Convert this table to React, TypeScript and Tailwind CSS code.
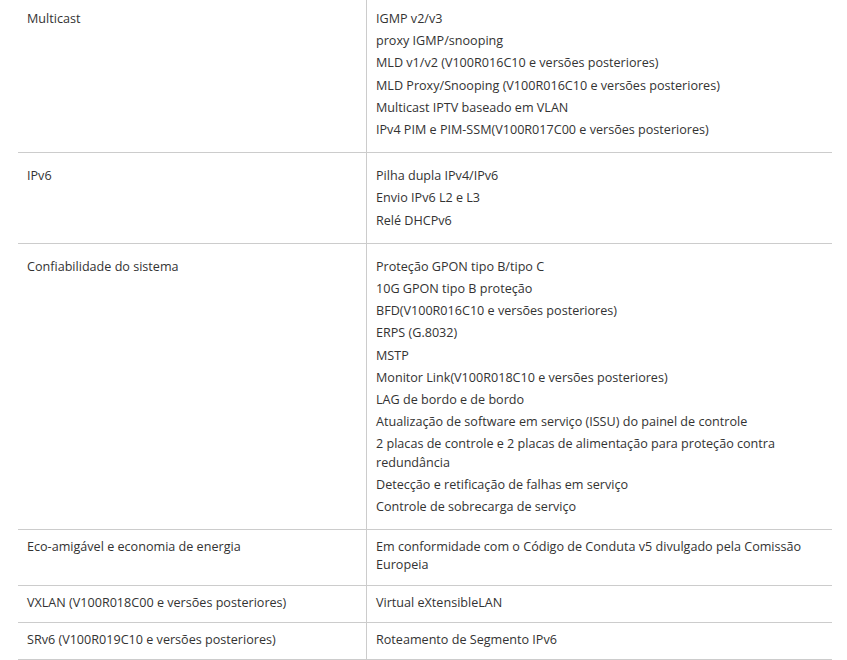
import React from "react";

type Row = { label: string; items: string[] };

const rows: Row[] = [
  {
    label: "Multicast",
    items: [
      "IGMP v2/v3",
      "proxy IGMP/snooping",
      "MLD v1/v2 (V100R016C10 e versões posteriores)",
      "MLD Proxy/Snooping (V100R016C10 e versões posteriores)",
      "Multicast IPTV baseado em VLAN",
      "IPv4 PIM e PIM-SSM(V100R017C00 e versões posteriores)",
    ],
  },
  {
    label: "IPv6",
    items: ["Pilha dupla IPv4/IPv6", "Envio IPv6 L2 e L3", "Relé DHCPv6"],
  },
  {
    label: "Confiabilidade do sistema",
    items: [
      "Proteção GPON tipo B/tipo C",
      "10G GPON tipo B proteção",
      "BFD(V100R016C10 e versões posteriores)",
      "ERPS (G.8032)",
      "MSTP",
      "Monitor Link(V100R018C10 e versões posteriores)",
      "LAG de bordo e de bordo",
      "Atualização de software em serviço (ISSU) do painel de controle",
      "2 placas de controle e 2 placas de alimentação para proteção contra redundância",
      "Detecção e retificação de falhas em serviço",
      "Controle de sobrecarga de serviço",
    ],
  },
  {
    label: "Eco-amigável e economia de energia",
    items: ["Em conformidade com o Código de Conduta v5 divulgado pela Comissão Europeia"],
  },
  {
    label: "VXLAN (V100R018C00 e versões posteriores)",
    items: ["Virtual eXtensibleLAN"],
  },
  {
    label: "SRv6 (V100R019C10 e versões posteriores)",
    items: ["Roteamento de Segmento IPv6"],
  },
];

export default function App() {
  return (
    <div
      className="w-[847px] h-[660px] overflow-hidden bg-white text-[12.6px] leading-[18.2px] text-[#333333]"
      style={{ fontFamily: '"Open Sans", "Liberation Sans", sans-serif' }}
    >
      <div className="ml-[18px] w-[814px]">
        {rows.map((row, i) => {
          const multi = row.items.length > 1;
          const pad = i === 0 ? "pt-[10px] pb-[9px]" : multi ? "pt-[14px] pb-[9px]" : "pt-2 pb-[10px]";
          return (
            <div key={i} className="flex border-b border-[#cccccc]">
              <div className={`w-[349px] shrink-0 border-r border-[#cccccc] pl-[9px] pr-[10px] ${pad}`}>
                {row.label}
              </div>
              <div className={`flex-1 pl-[9px] pr-[10px] ${pad}`}>
                {row.items.map((it, j) => (
                  <p key={j} className={multi ? "mb-1" : ""}>
                    {it}
                  </p>
                ))}
              </div>
            </div>
          );
        })}
      </div>
    </div>
  );
}
